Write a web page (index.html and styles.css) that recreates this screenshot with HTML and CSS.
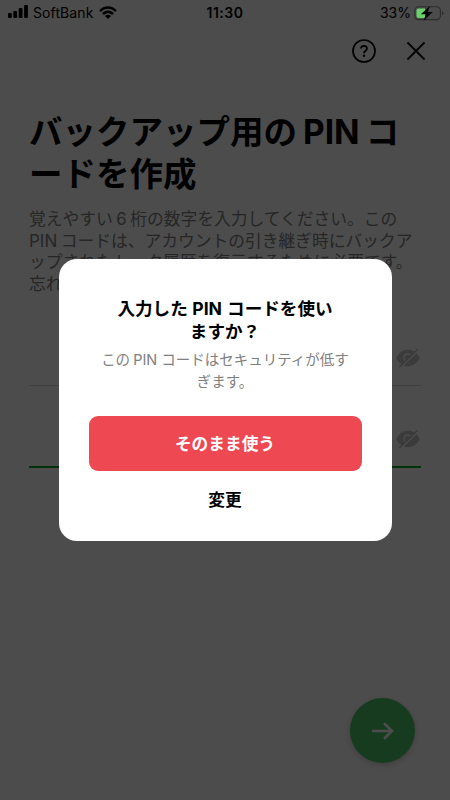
FILE: index.html
```
<!DOCTYPE html>
<html lang="ja">
<head>
<meta charset="utf-8">
<title>PINコード</title>
<link rel="stylesheet" href="styles.css">
</head>
<body>
<div class="screen">
  <header class="status">
    <div class="carrier">
      <svg class="signal" width="21" height="13" viewBox="0 0 21 13"><rect x="0" y="8" width="3.8" height="5" rx="1"/><rect x="5.3" y="6" width="3.8" height="7" rx="1"/><rect x="10.7" y="3" width="3.8" height="10" rx="1"/><rect x="16.1" y="0" width="3.8" height="13" rx="1"/></svg>
      <span class="carrier-name">SoftBank</span>
      <svg class="wifi" width="18" height="13" viewBox="0 0 18 13"><path d="M0.2 4.2C5-1.2 13-1.2 17.8 4.2L16 6C12 1.8 6 1.8 2 6Z"/><path d="M3.1 7.2C6.4 3.7 11.6 3.7 14.9 7.2L13.1 9C10.7 6.5 7.3 6.5 4.9 9Z"/><path d="M6 10.1C7.7 8.4 10.3 8.4 12 10.1L9 13Z"/></svg>
    </div>
    <div class="clock">11:30</div>
    <div class="power">
      <span class="percent">33%</span>
      <svg class="battery" width="30" height="16" viewBox="0 0 30 16"><rect x=".8" y="1.8" width="25.6" height="12.8" rx="3.8" fill="none" stroke="#2c2c2c" stroke-width="1.1"/><path d="M28 6V10.5Q29.4 9.8 29.4 8.2T28 6Z" fill="#2c2c2c"/><path d="M4.5 3.5H11V13H4.5Q2.5 13 2.5 11V5.5Q2.5 3.5 4.5 3.5Z" fill="#68d16b"/><path d="M15.9 .9 6.8 9.2H11.8L9.6 15.7 18.9 7H13.8Z" fill="#000"/></svg>
    </div>
  </header>
  <nav class="tools">
    <svg width="24" height="24" viewBox="0 0 24 24"><circle cx="12" cy="12" r="11" fill="none" stroke="#000" stroke-width="1.7"/><path d="M9 9.6C9 5.9 15 5.9 15 9.5C15 11.8 12 11.7 12 14.2" fill="none" stroke="#000" stroke-width="1.8"/><circle cx="12" cy="16.8" r="1.2"/></svg>
    <svg width="20" height="20" viewBox="0 0 20 20"><path d="M1.5 1.5 18.5 18.5M18.5 1.5 1.5 18.5" stroke="#000" stroke-width="1.8"/></svg>
  </nav>
  <main class="form">
    <h1 class="title">バックアップ用の<span class="latin">PIN</span>コ<br>ードを作成</h1>
    <p class="desc">覚えやすい<span class="latin">6</span>桁の数字を入力してください。この<br><span class="latin first">PIN</span>コードは、アカウントの引き継ぎ時にバックア<br>ップされたトーク履歴を復元するために必要です。<br>忘れ</p>
    <div class="field">
      <svg class="eye" width="26" height="20" viewBox="0 0 26 20"><path d="M1 10Q6 1.6 13 1.6T25 10Q20 18.4 13 18.4T1 10Z" fill="#c7c7c7"/><path d="M10.6 13A3.8 3.8 0 1 1 15.6 7.4" fill="none" stroke="#fff" stroke-width="1.3"/><path d="M5.4 20 23.6 2.2" stroke="#fff" stroke-width="1.4"/><path d="M4.4 19 22.6 1.2" stroke="#c7c7c7" stroke-width="1.6"/></svg>
    </div>
    <div class="field active">
      <svg class="eye" width="26" height="20" viewBox="0 0 26 20"><path d="M1 10Q6 1.6 13 1.6T25 10Q20 18.4 13 18.4T1 10Z" fill="#c7c7c7"/><path d="M10.6 13A3.8 3.8 0 1 1 15.6 7.4" fill="none" stroke="#fff" stroke-width="1.3"/><path d="M5.4 20 23.6 2.2" stroke="#fff" stroke-width="1.4"/><path d="M4.4 19 22.6 1.2" stroke="#c7c7c7" stroke-width="1.6"/></svg>
    </div>
  </main>
  <div class="next"><svg width="22" height="18" viewBox="0 0 22 18"><path d="M0 9H20M12 1.2 20 9 12 16.8" fill="none" stroke="#fff" stroke-width="2.6"/></svg></div>
</div>
<div class="overlay">
  <section class="dialog">
    <h2 class="question">入力した<span class="latin">PIN</span>コードを使い<br>ますか？</h2>
    <p class="note">この<span class="latin">PIN</span>コードはセキュリティが低す<br>ぎます。</p>
    <div class="button">そのまま使う</div>
    <div class="change">変更</div>
  </section>
</div>
</body>
</html>
```

FILE: styles.css
```
* { box-sizing: border-box; margin: 0; }
body { width: 450px; height: 800px; overflow: hidden; background: #fff; color: #000; font-family: "Noto Sans CJK JP", sans-serif; }
.screen { width: 450px; height: 800px; display: flex; flex-direction: column; }
.status { position: relative; z-index: 3; height: 26px; padding: 0 6px 0 8px; display: grid; grid-template-columns: 1fr auto 1fr; align-items: center; font: 14px/26px Inter, sans-serif; }
.carrier, .power { display: flex; align-items: center; }
.signal { margin-top: -3px; }
.carrier-name { margin-left: 4px; margin-top: -1px; letter-spacing: .1px; }
.wifi { margin: -2px 0 0 6px; }
.clock { margin: -1px 2px 0 0; font-weight: 600; letter-spacing: .5px; }
.power { justify-content: flex-end; gap: 3px; }
.percent { margin-top: -1px; }
.battery { margin-top: -1px; }
.tools { height: 50px; padding-right: 24px; display: flex; justify-content: flex-end; align-items: center; gap: 30px; }
.form { padding: 33px 29px 0; }
.latin { font-family: Inter, sans-serif; line-height: 0; }
.title { height: 86px; font-size: 33.5px; line-height: 42px; font-weight: 700; white-space: nowrap; }
.title .latin { margin: 0 6px; }
.desc { height: 102px; margin-top: 13px; font-size: 16.75px; line-height: 21.7px; color: #808080; white-space: nowrap; font-weight: 400; }
.desc .latin { margin: 0 3.5px; }
.desc .first { margin-left: 0; font-size: 17px; }
.field { height: 76px; display: flex; justify-content: flex-end; align-items: flex-end; padding-bottom: 17px; border-bottom: 1px solid #d8d8d8; }
.active { height: 82px; border-bottom: 2px solid #08a52b; }
.next { width: 65px; height: 65px; margin: auto 35px 37px auto; border-radius: 50%; background: #4fc766; display: flex; align-items: center; justify-content: center; box-shadow: 0 2px 6px rgba(0,0,0,.2); }
.overlay { position: absolute; inset: 0; z-index: 2; background: rgba(0,0,0,.7); display: flex; align-items: center; justify-content: center; }
.dialog { width: 333px; height: 282px; border-radius: 18px; background: #fff; padding: 37px 30px 0; text-align: center; white-space: nowrap; }
.question { height: 46px; font-size: 17.6px; line-height: 23px; font-weight: 700; }
.question .latin { margin: 0 5px 0 4.5px; }
.note { height: 44px; margin-top: 6px; font-size: 14.5px; line-height: 22px; color: #808080; }
.note .latin { margin: 0 4px 0 3px; }
.button { height: 55px; margin-top: 24px; border-radius: 9px; background: #ee4852; color: #fff; font-size: 16.7px; line-height: 54px; font-weight: 700; }
.change { margin-top: 15px; font-size: 16.7px; line-height: 26px; font-weight: 700; }
```
